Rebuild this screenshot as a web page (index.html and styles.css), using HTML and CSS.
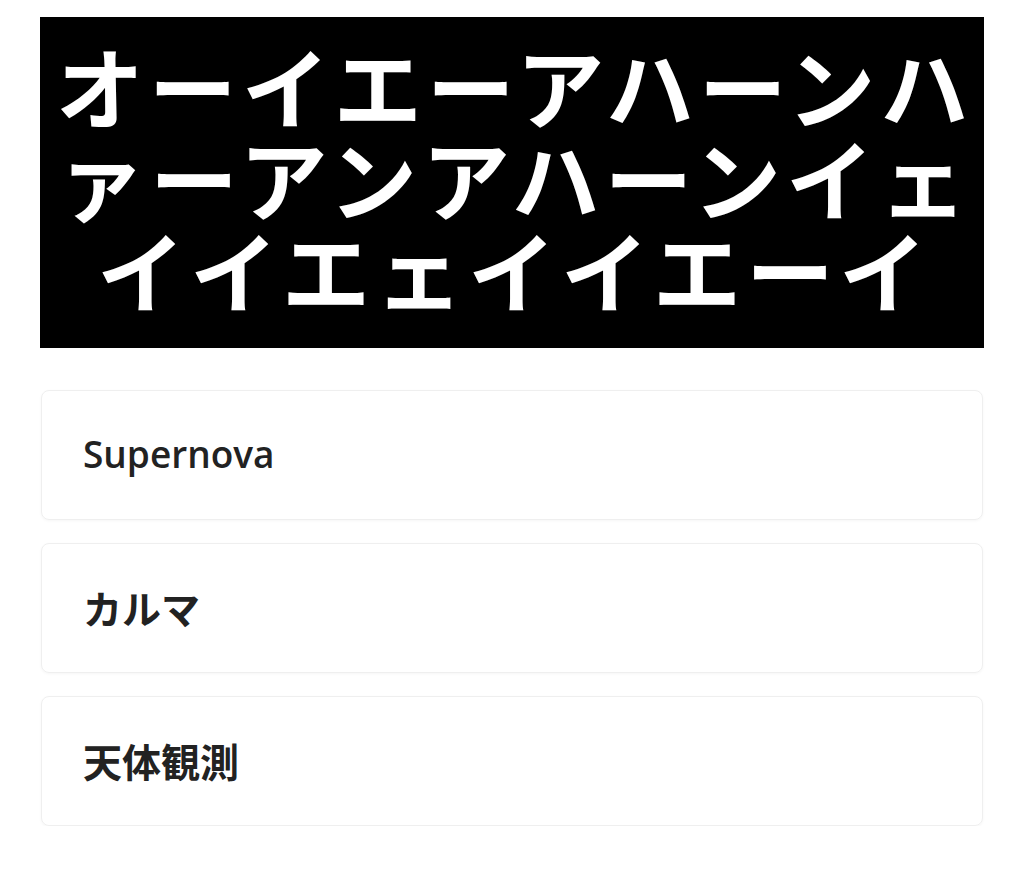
FILE: index.html
```html
<!DOCTYPE html>
<html lang="ja">
<head>
    <meta charset="UTF-8">
    <meta name="viewport" content="width=device-width, initial-scale=1.0">
    <title>Supernova</title>
    <link rel="stylesheet" href="styles.css">
</head>
<body>
    <div class="page">
        <!--タイトル画像-->
        <div class="banner">
            <p>オーイエーアハーンハ</p>
            <p>ァーアンアハーンイェ</p>
            <p>イイエェイイエーイ</p>
        </div>
        <!--曲リスト-->
        <ul class="songs">
            <li>Supernova</li>
            <li class="ja">カルマ</li>
            <li class="ja">天体観測</li>
        </ul>
    </div>
</body>
</html>
```

FILE: styles.css
```css
*{
    margin:0;
    padding:0;
}
body{
    background-color:#fff;
    font-family:"Open Sans","Noto Sans CJK JP",sans-serif;
}
.page{
    padding:17px 40px 0 40px;
}
/*タイトル*/
.banner{
    background-color:#000;
    color:#fff;
    height:331px;
    display:flex;
    flex-direction:column;
    justify-content:center;
    align-items:center;
    font-family:"Noto Sans CJK JP",sans-serif;
    font-weight:700;
    font-size:88px;
    line-height:92px;
    letter-spacing:5px;
    padding-bottom:14px;
    padding-left:5px;
    box-sizing:border-box;
}
.banner p{
    white-space:nowrap;
}
/*リスト*/
.songs{
    list-style:none;
    margin-top:42px;
    display:flex;
    flex-direction:column;
    gap:23px;
    padding:0 1px;
}
.songs li{
    height:130px;
    box-sizing:border-box;
    border:1px solid #efefef;
    border-radius:8px;
    box-shadow:0 1px 3px rgba(0,0,0,0.04);
    display:flex;
    align-items:center;
    padding-left:41px;
    padding-bottom:3px;
    font-size:37px;
    font-weight:600;
    color:#222;
}
.songs li.ja{
    font-size:39px;
}
```
